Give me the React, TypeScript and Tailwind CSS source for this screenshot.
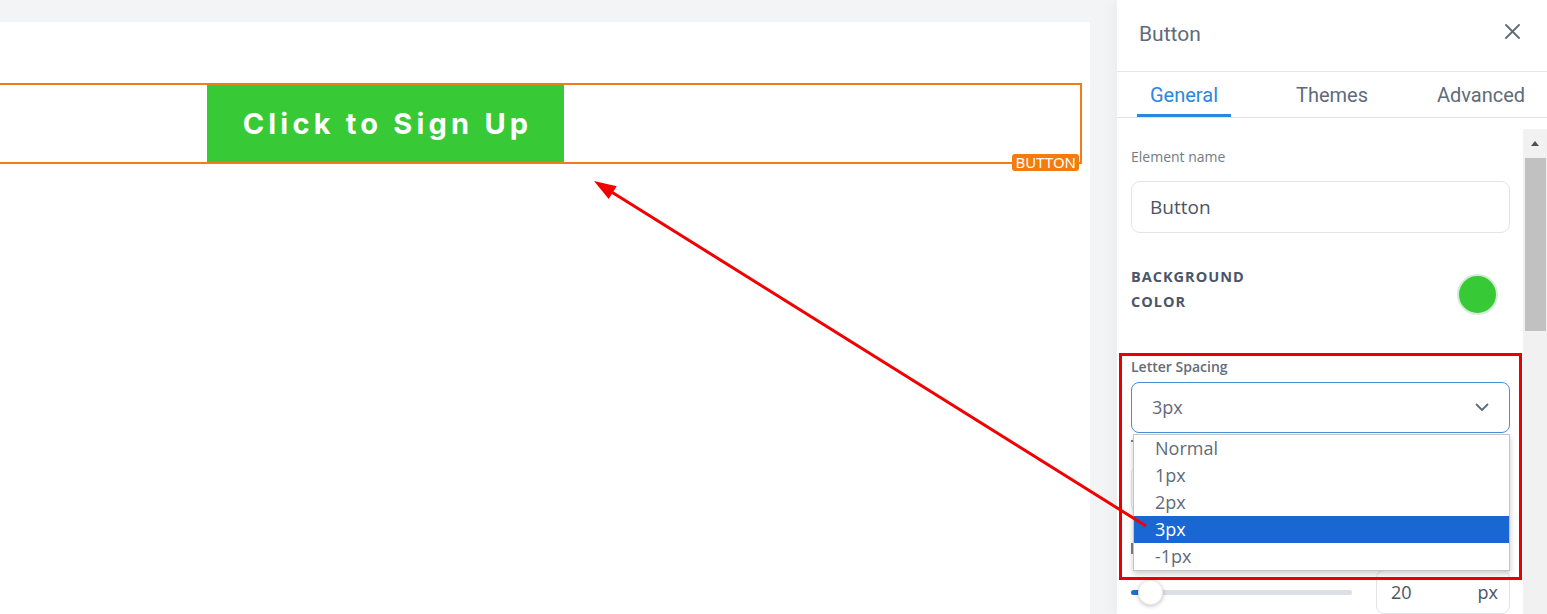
import React from "react";

const tabs = [
  { label: "General", w: "w-[94px]", ml: "", active: true },
  { label: "Themes", w: "w-[96px]", ml: "ml-[53px]", active: false },
  { label: "Advanced", w: "w-[116px]", ml: "ml-[43px]", active: false },
];

const options = ["Normal", "1px", "2px", "3px", "-1px"];

export default function App() {
  return (
    <div className="relative flex h-[614px] w-[1547px] overflow-hidden bg-[#f3f4f6]">
      {/* Canvas */}
      <div className="w-[1090px] shrink-0 pt-[22px]">
        <div className="h-full overflow-hidden bg-white pt-[61px]">
          <div className="relative h-[81px] w-[1082px] border-2 border-l-0 border-[#ef7d1a] pl-[207px]">
            <div className="flex h-full w-[357px] items-center justify-center bg-[#38c936] pl-[4px] font-['Inter',sans-serif] text-[29px] font-bold tracking-[4.2px] text-white">
              Click to Sign Up
            </div>
            <div className="absolute right-[1px] -bottom-[9px] rounded-[3px] bg-[#f47b0c] px-[3px] font-['Noto_Sans',sans-serif] text-[15px] leading-[17px] text-white">
              BUTTON
            </div>
          </div>
        </div>
      </div>

      {/* Panel */}
      <div className="ml-[27px] flex w-[430px] shrink-0 flex-col bg-white shadow-[-6px_0_12px_rgba(0,0,0,0.03)]">
        <div className="flex h-[72px] shrink-0 items-start justify-between border-b border-[#e3e5e8] pt-[22px] pl-[22px] pr-[27px]">
          <span className="font-['Roboto',sans-serif] text-[21px] leading-[24px] text-[#5f6b7a]">
            Button
          </span>
          <svg className="mt-[2px]" width="15" height="15" viewBox="0 0 15 15">
            <path d="M1 1L14 14M14 1L1 14" stroke="#5f6b7a" strokeWidth="1.8" strokeLinecap="round" />
          </svg>
        </div>

        <div className="flex h-[46px] shrink-0 border-b border-[#dfe2e6] pl-[20px]">
          {tabs.map((t) => (
            <div
              key={t.label}
              className={`${t.w} ${t.ml} flex items-center justify-center font-['Roboto',sans-serif] text-[20px] ${
                t.active
                  ? "border-b-[3px] border-[#2b87de] pt-[3px] text-[#2b87de]"
                  : "text-[#5f6b7a]"
              }`}
            >
              {t.label}
            </div>
          ))}
        </div>

        <div className="flex min-h-0 flex-1">
          <div className="relative flex-1 pt-[29px] pl-[14px] pr-[13px] font-['Open_Sans',sans-serif]">
            <div className="text-[14px] leading-[20px] text-[#737b86]">Element name</div>
            <div className="mt-[14px] flex h-[52px] items-center rounded-[9px] border border-[#e2e4e8] pl-[18px] text-[19px] text-[#4b5563]">
              Button
            </div>

            <div className="mt-[31px] flex items-start justify-between">
              <div className="text-[14.5px] font-bold uppercase leading-[25px] tracking-[1px] text-[#4a5568]">
                Background
                <br />
                Color
              </div>
              <div className="mt-[10px] mr-[12px] h-[41px] w-[41px] rounded-full border-2 border-[#d3ecd5] bg-[#38c936]" />
            </div>

            <div className="mt-[42px] text-[14px] font-semibold leading-[20px] text-[#646c78]">
              Letter Spacing
            </div>
            <div className="relative mt-[5px]">
              <div className="flex h-[51px] items-center justify-between rounded-[8px] border-[1.5px] border-[#4a8fdc] pl-[20px] pr-[20px] text-[18px] text-[#5f6b7a]">
                <span>3px</span>
                <svg width="14" height="9" viewBox="0 0 14 9">
                  <path d="M1.5 1.5L7 7L12.5 1.5" stroke="#5f6b7a" strokeWidth="1.8" fill="none" strokeLinecap="round" strokeLinejoin="round" />
                </svg>
              </div>
              <div className="absolute top-[calc(100%+1px)] right-0 left-[2px] z-10 border border-[#c4c4c4] bg-white shadow-[0_3px_6px_rgba(0,0,0,0.2)]">
                {options.map((o) => (
                  <div
                    key={o}
                    className={`h-[27px] pl-[21px] text-[18px] leading-[27px] ${
                      o === "3px" ? "bg-[#1967d2] text-white" : "text-[#5f6b7a]"
                    }`}
                  >
                    {o}
                  </div>
                ))}
              </div>
            </div>

            {/* fields hidden behind the open list (only their left edges peek out) */}
            <div className="mt-[2px] h-[20px] pt-[5px]">
              <div className="h-[2px] w-[3px] bg-[#7a818b]" />
            </div>
            <div className="mt-[10px] h-[48px] rounded-[8px] border border-[#e2e4e8]" />
            <div className="mt-[25px] h-[20px] pt-[5px]">
              <div className="h-[11px] w-[2px] bg-[#7a818b]" />
            </div>

            <div className="mt-[12px] flex items-center gap-[24px]">
              <div className="relative h-[5px] w-[221px] rounded-full bg-[#dcdfe4]">
                <div className="h-full w-[10px] rounded-full bg-[#1f6fd6]" />
                <div className="absolute top-[-10px] left-[7px] h-[25px] w-[25px] rounded-full border border-[#eceef1] bg-white shadow-[0_1px_4px_rgba(0,0,0,0.25)]" />
              </div>
              <div className="flex h-[44px] w-[134px] items-center justify-between rounded-[8px] border border-[#e2e4e8] pl-[14px] pr-[11px] text-[18px] text-[#4b5563]">
                <span>20</span>
                <span>px</span>
              </div>
            </div>
          </div>

          {/* Scrollbar */}
          <div className="mt-[11px] flex w-[24px] shrink-0 flex-col bg-[#f1f1f1]">
            <div className="flex h-[29px] items-center justify-center">
              <div className="h-0 w-0 border-x-[4px] border-b-[5px] border-x-transparent border-b-[#505050]" />
            </div>
            <div className="ml-[2px] mr-[1px] h-[173px] bg-[#c1c1c1]" />
          </div>
        </div>
      </div>

      {/* Annotation: red box */}
      <div className="pointer-events-none absolute top-[353px] left-[1119px] z-20 h-[227px] w-[403px] border-[3px] border-[#e80000]" />

      {/* Annotation: arrow */}
      <svg
        className="pointer-events-none absolute inset-0 z-20"
        width="1547"
        height="614"
        viewBox="0 0 1547 614"
      >
        <line x1="1146" y1="526" x2="610" y2="191" stroke="#f20000" strokeWidth="3" />
        <polygon points="594,181 608.7,199.1 616.7,186.3" fill="#f20000" />
      </svg>
    </div>
  );
}
